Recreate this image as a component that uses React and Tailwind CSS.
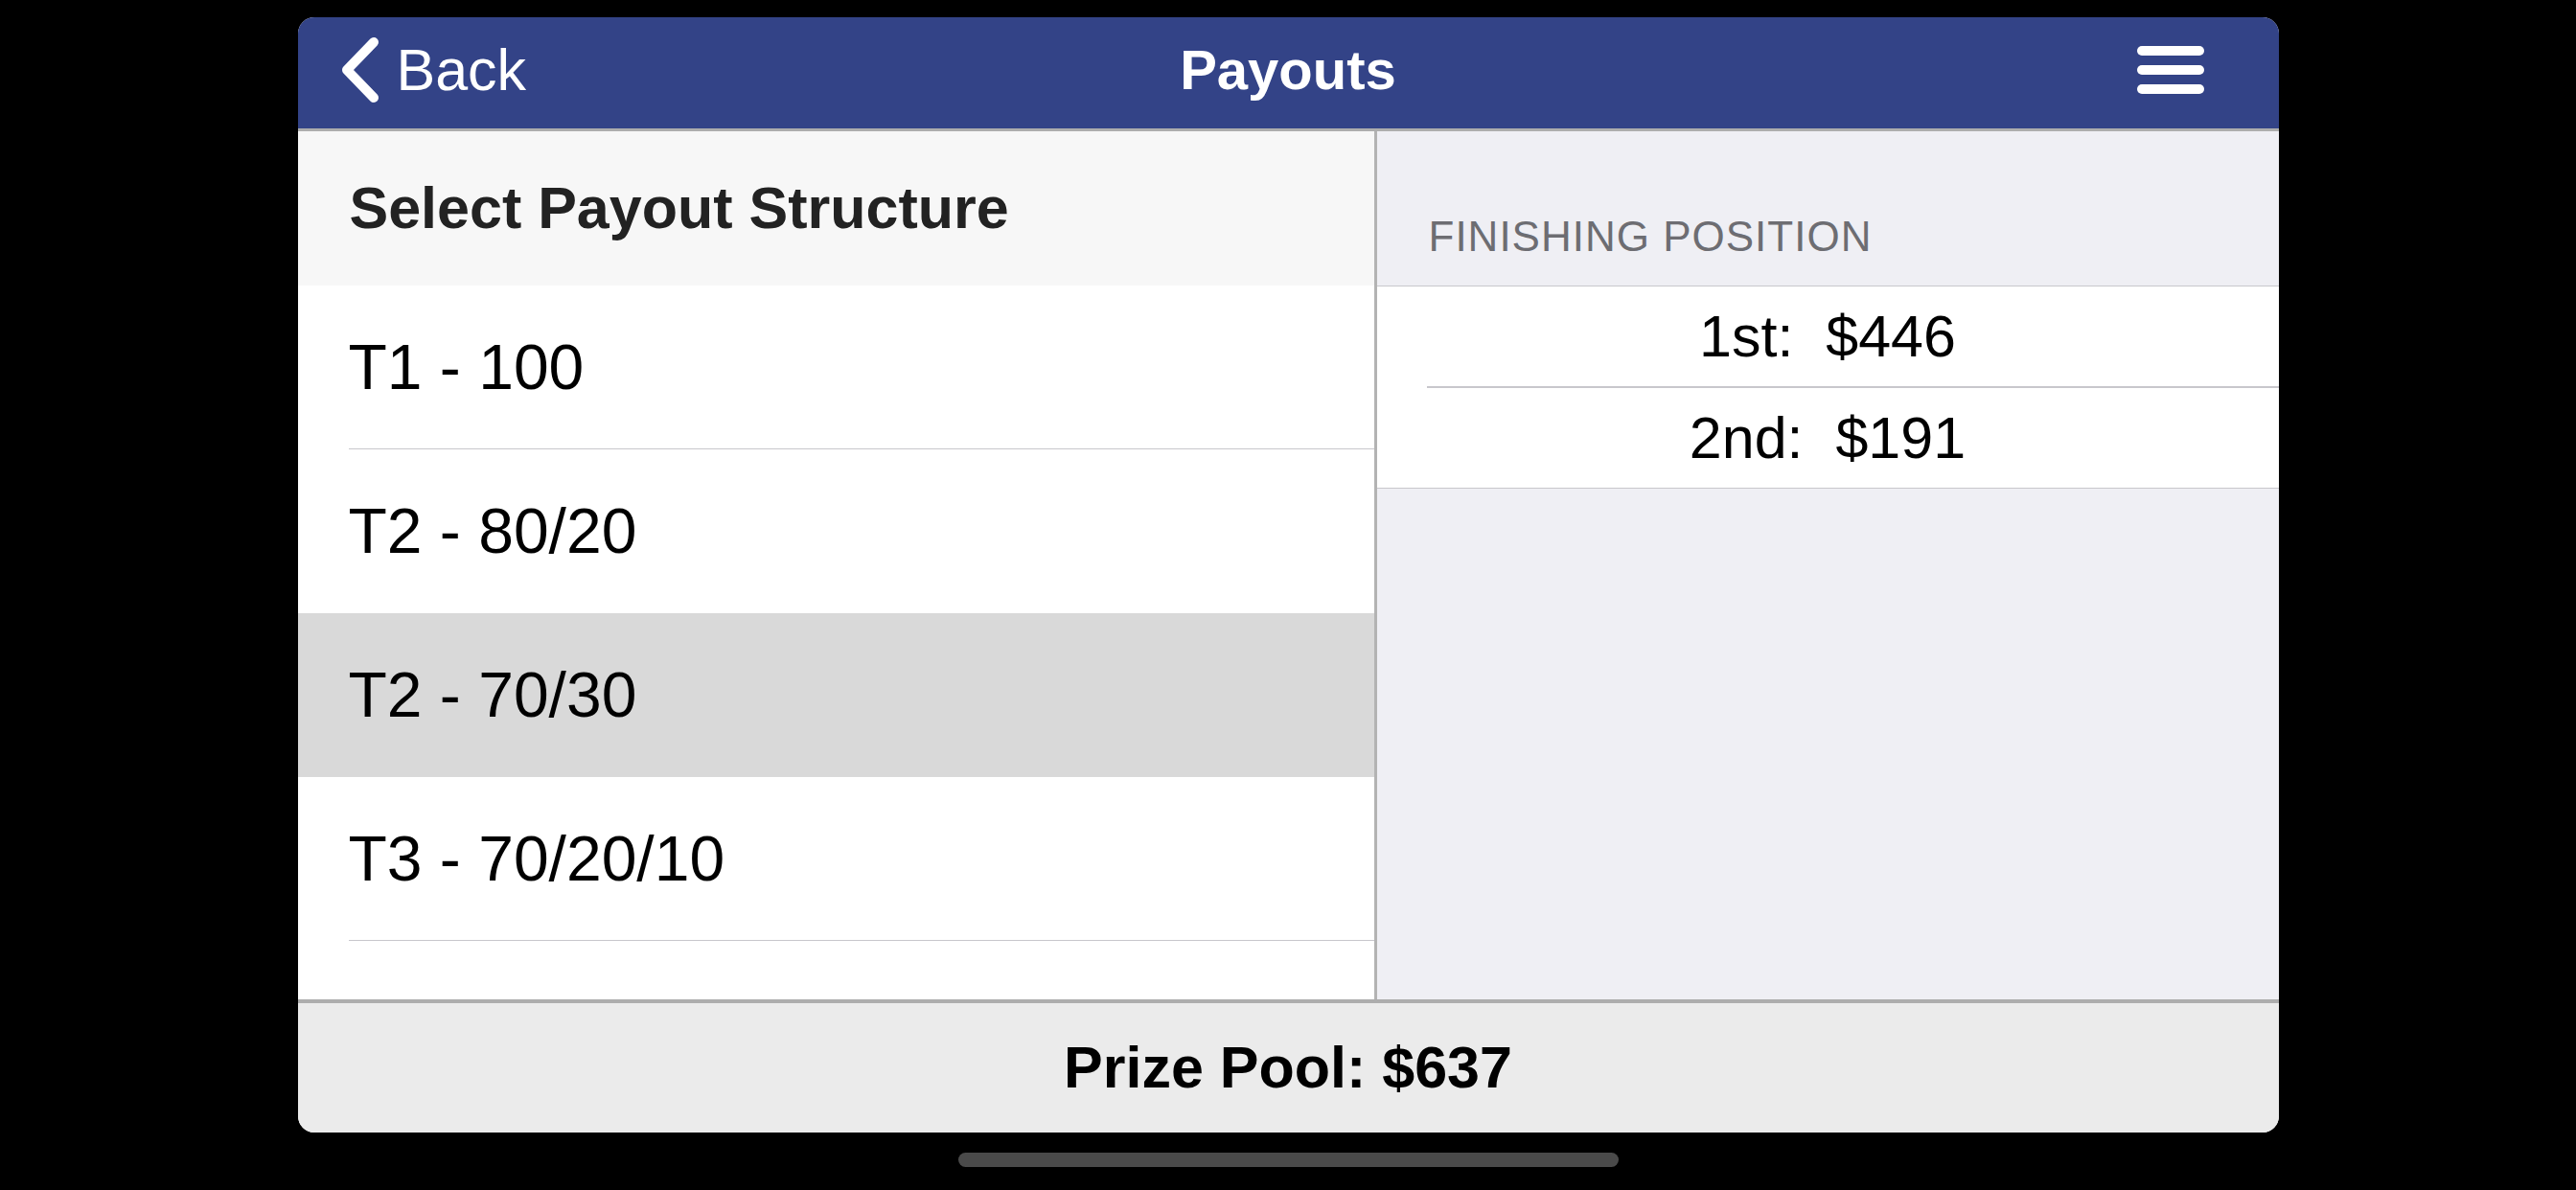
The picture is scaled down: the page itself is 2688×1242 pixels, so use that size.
const structures = [
  { label: "T1 - 100", line: true },
  { label: "T2 - 80/20", line: false },
  { label: "T2 - 70/30", selected: true, line: false },
  { label: "T3 - 70/20/10", line: true },
];

const places = [
  { label: "1st:  $446" },
  { label: "2nd:  $191" },
];

function BackChevron() {
  return (
    <svg width="44" height="70" viewBox="0 0 44 70" fill="none">
      <polyline
        points="35,6 7,35 35,64"
        stroke="white"
        strokeWidth="10"
        strokeLinecap="round"
        strokeLinejoin="round"
      />
    </svg>
  );
}

function MenuIcon() {
  return (
    <div className="flex flex-col gap-[10px] w-[70px]">
      <div className="h-[10px] rounded-full bg-white" />
      <div className="h-[10px] rounded-full bg-white" />
      <div className="h-[10px] rounded-full bg-white" />
    </div>
  );
}

export default function App() {
  return (
    <div className="w-[2688px] h-[1242px] bg-black flex flex-col items-center pt-[18px] font-['Liberation_Sans',Arial,sans-serif]">
      <div className="w-[2067px] h-[1164px] rounded-[17px] overflow-hidden flex flex-col bg-white">
        {/* Header */}
        <div className="h-[116px] bg-[#334387] grid grid-cols-[1fr_auto_1fr] items-center pb-[6px]">
          <div className="flex items-center pl-[44px] gap-[15px] text-white">
            <BackChevron />
            <span className="text-[61px] leading-none">Back</span>
          </div>
          <div className="text-white font-bold text-[58px] leading-none">Payouts</div>
          <div className="flex justify-end pr-[78px]">
            <MenuIcon />
          </div>
        </div>
        <div className="h-[3px] bg-[#adadad]" />

        {/* Body */}
        <div className="h-[906px] flex">
          {/* Left list */}
          <div className="w-[1126px] border-r-[3px] border-[#b3b3b3] bg-white flex flex-col">
            <div className="h-[161px] bg-[#f7f7f7] flex items-center pl-[54px]">
              <span className="text-[61px] leading-none font-bold text-[#222222]">Select Payout Structure</span>
            </div>
            {structures.map((s) => (
              <div key={s.label} className={`h-[171px] pl-[53px] ${s.selected ? "bg-[#d9d9d9]" : ""}`}>
                <div
                  className={`h-full flex items-center border-b ${s.line ? "border-[#c8c7cc]" : "border-transparent"}`}
                >
                  <span className="text-[66px] leading-none text-black">{s.label}</span>
                </div>
              </div>
            ))}
          </div>

          {/* Right details */}
          <div className="flex-1 bg-[#efeff4] flex flex-col">
            <div className="h-[161px] flex items-end pl-[54px] pb-[25px]">
              <span className="text-[44px] leading-[52px] text-[#6d6d72] uppercase tracking-[1px]">
                Finishing Position
              </span>
            </div>
            <div className="bg-white border-y border-[#c8c7cc]">
              {places.map((p, i) => (
                <div key={p.label}>
                  {i > 0 && <div className="ml-[52px] h-[2px] bg-[#c8c7cc]" />}
                  <div className="h-[104px] flex items-center justify-center">
                    <span className="text-[61px] leading-none text-black whitespace-pre">{p.label}</span>
                  </div>
                </div>
              ))}
            </div>
          </div>
        </div>

        {/* Footer */}
        <div className="h-[4px] bg-[#adadad]" />
        <div className="h-[135px] bg-[#ebebeb] flex items-center justify-center">
          <span className="text-[61px] leading-none font-bold text-black">Prize Pool: $637</span>
        </div>
      </div>
      <div className="mt-[21px] w-[689px] h-[15px] rounded-full bg-[#4a4a4a]" />
    </div>
  );
}
